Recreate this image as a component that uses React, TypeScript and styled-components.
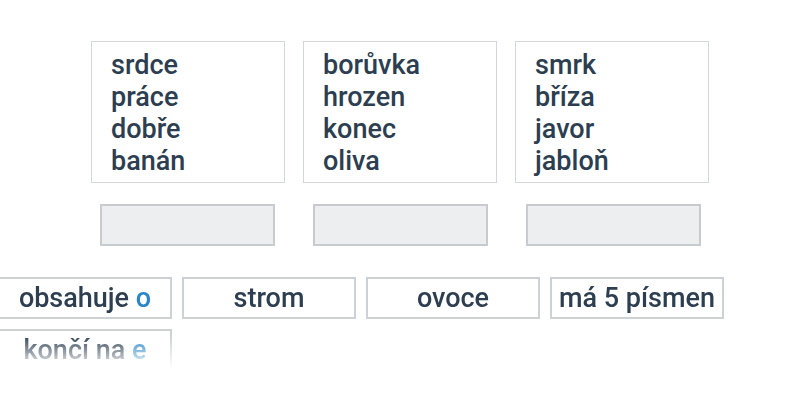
import React from "react";
import styled, { createGlobalStyle } from "styled-components";

const Global = createGlobalStyle`
  html, body { margin: 0; padding: 0; background: #fff; }
  body { font-family: Roboto, "Noto Sans", sans-serif; color: #2c3e50; }
`;

const Page = styled.div`
  width: 800px;
  height: 400px;
  overflow: hidden;
  display: flex;
  flex-direction: column;
`;

const Groups = styled.div`
  display: grid;
  grid-template-columns: repeat(3, 194px);
  column-gap: 18px;
  padding: 41px 0 0 91px;
`;

const Column = styled.div`
  display: flex;
  flex-direction: column;
  align-items: center;
  gap: 21px;
`;

const Card = styled.div`
  box-sizing: border-box;
  width: 194px;
  height: 142px;
  border: 1px solid #d3d7db;
  padding: 7px 0 0 19px;
  display: flex;
  flex-direction: column;
`;

const Word = styled.div`
  font-size: 27px;
  font-weight: 500;
  line-height: 32px;
  color: #2c3e50;
`;

const Slot = styled.div<{ $shift: number }>`
  box-sizing: border-box;
  width: 175px;
  height: 42px;
  background: #eceef0;
  border: 2px solid #c7cbcf;
  margin-left: ${(p) => p.$shift}px;
`;

const Bay = styled.div`
  margin: 31px 0 0 -2px;
  width: 740px;
  height: 92px;
  overflow: hidden;
  display: flex;
  flex-wrap: wrap;
  gap: 10px;
  -webkit-mask-image: linear-gradient(to bottom, #000 0, #000 58px, transparent 92px);
  mask-image: linear-gradient(to bottom, #000 0, #000 58px, transparent 92px);
`;

const Chip = styled.div`
  box-sizing: border-box;
  width: 174px;
  height: 42px;
  border: 2px solid #ccd1d5;
  background: #fff;
  display: flex;
  align-items: center;
  justify-content: center;
  font-size: 27px;
  font-weight: 500;
  color: #2c3e50;
  white-space: nowrap;
  padding-bottom: 1px;
`;

const Accent = styled.span`
  color: #2a86c4;
`;

const groups = [
  ["srdce", "práce", "dobře", "banán"],
  ["borůvka", "hrozen", "konec", "oliva"],
  ["smrk", "bříza", "javor", "jabloň"],
];

const shifts = [-1, 1, 3];

export default function App() {
  return (
    <Page>
      <Global />
      <Groups>
        {groups.map((g, i) => (
          <Column key={i}>
            <Card>
              {g.map((w) => (
                <Word key={w}>{w}</Word>
              ))}
            </Card>
            <Slot $shift={shifts[i]} />
          </Column>
        ))}
      </Groups>
      <Bay>
        <Chip>
          obsahuje&nbsp;<Accent>o</Accent>
        </Chip>
        <Chip>strom</Chip>
        <Chip>ovoce</Chip>
        <Chip>má 5 písmen</Chip>
        <Chip>
          končí na&nbsp;<Accent>e</Accent>
        </Chip>
      </Bay>
    </Page>
  );
}
